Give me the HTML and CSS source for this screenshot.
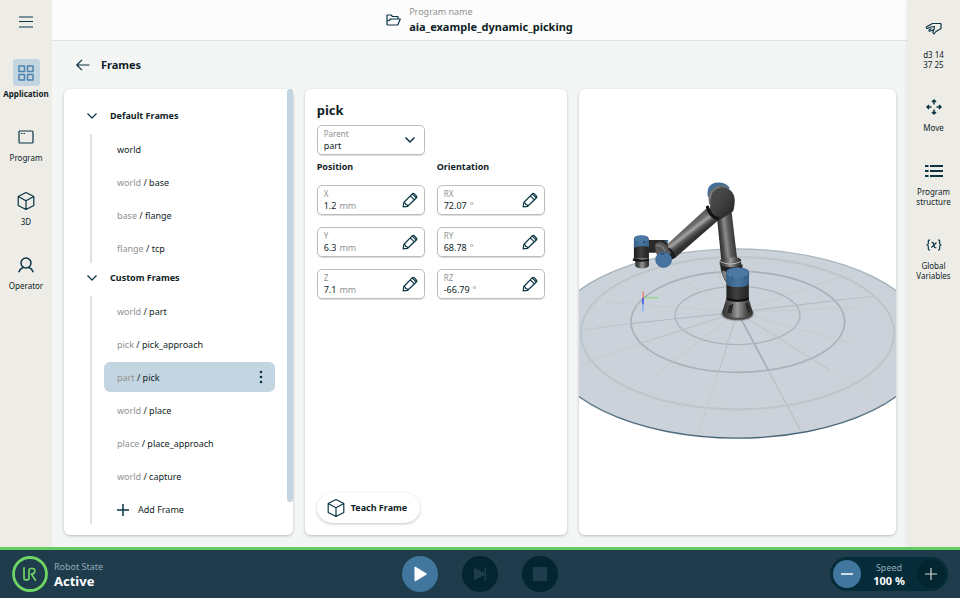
FILE: index.html
```html
<!DOCTYPE html>
<html lang="en">
<head>
<meta charset="utf-8">
<meta name="viewport" content="width=device-width, initial-scale=1">
<title>Frames</title>
<link rel="stylesheet" href="styles.css">
</head>
<body>
<svg class="defs" aria-hidden="true">
  <symbol id="chevron" viewBox="0 0 12 12"><path d="M1.500 3.500 6 8l4.500-4.500"/></symbol>
  <symbol id="cube" viewBox="0 0 18 20"><path d="M9 1.500 16.800 5.500v9L9 18.500 1.200 14.500v-9zM1.200 5.500 9 9.800l7.800-4.300M9 9.800v8.700"/></symbol>
  <symbol id="pencil" viewBox="0 0 16 16"><path d="M1.200 14.800 1.800 10.500 10.200 1.900q1.100-1 2.200 0l1.900 1.900q1 1.100 0 2.200L5.700 14.300zM8.300 3.900l4 4M10.200 1.900l4.100 4.100M1.800 10.500q1.700 0 1.900 1.900 1.900.1 2 1.900"/></symbol>
</svg>

<div class="workspace">
  <nav class="rail rail-left" aria-label="Main">
    <button class="menu" aria-label="Menu"><svg width="14" height="12" viewBox="0 0 14 12"><path d="M0 1h14M0 11h14" stroke="#78909a" stroke-width="2"/><path d="M0 5.500h14" stroke="#0b3544"/></svg></button>
    <a class="rail-item active" href="#application"><span class="rail-icon"><svg class="icon" width="16" height="16" viewBox="0 0 16 16"><path d="M1 1h5.500v5.500H1zM9.500 1H15v5.500H9.500zM1 9.500h5.500V15H1zM9.500 9.500H15V15H9.500z"/></svg></span><span>Application</span></a>
    <a class="rail-item" href="#program"><span class="rail-icon"><svg class="icon" width="16" height="14" viewBox="0 0 16 14"><rect x="1" y="1" width="14" height="12" rx="1"/><path d="M3 3.500h1.500M5.500 3.500H7"/></svg></span><span>Program</span></a>
    <a class="rail-item" href="#view"><span class="rail-icon"><svg class="icon" width="18" height="20"><use href="#cube"/></svg></span><span>3D</span></a>
    <a class="rail-item" href="#operator"><span class="rail-icon"><svg class="icon thick" width="16" height="16" viewBox="0 0 16 16"><circle cx="8" cy="6" r="5"/><path d="M.8 15.300Q2 11.200 5.600 10.400M15.200 15.300Q14 11.200 10.400 10.400"/></svg></span><span>Operator</span></a>
  </nav>

  <div class="center">
    <header class="program-bar">
      <svg class="icon" width="15" height="12" viewBox="0 0 15 12"><path d="M1 11V1h4l1.500 1.500H12V5M1 11h10.800L14.300 5H4.500L3.200 6.500 1 7"/></svg>
      <div class="stack"><span class="muted">Program name</span><strong>aia_example_dynamic_picking</strong></div>
    </header>

    <main>
      <div class="page-title">
        <button aria-label="Back"><svg class="icon" width="14" height="12" viewBox="0 0 14 12"><path d="M13.500 6H1M6 .8.8 6 6 11.200"/></svg></button>
        <h1>Frames</h1>
      </div>
      <div class="panels">
        <section class="panel tree" aria-label="Frame list">
          <button class="group"><svg class="icon" width="12" height="12"><use href="#chevron"/></svg>Default Frames</button>
          <ul>
            <li><button class="frame">world</button></li>
            <li><button class="frame"><i>world</i> / base</button></li>
            <li><button class="frame"><i>base</i> / flange</button></li>
            <li><button class="frame"><i>flange</i> / tcp</button></li>
          </ul>
          <button class="group"><svg class="icon" width="12" height="12"><use href="#chevron"/></svg>Custom Frames</button>
          <ul>
            <li><button class="frame"><i>world</i> / part</button></li>
            <li><button class="frame"><i>pick</i> / pick_approach</button></li>
            <li class="selected"><button class="frame"><i>part</i> / pick</button><button class="more" aria-label="More"><svg width="4" height="14" viewBox="0 0 4 14" fill="#0b3544"><circle cx="2" cy="2" r="1.300"/><circle cx="2" cy="7" r="1.300"/><circle cx="2" cy="12" r="1.300"/></svg></button></li>
            <li><button class="frame"><i>world</i> / place</button></li>
            <li><button class="frame"><i>place</i> / place_approach</button></li>
            <li><button class="frame"><i>world</i> / capture</button></li>
            <li><button class="frame add"><svg class="icon thick" width="12" height="12" viewBox="0 0 12 12"><path d="M6 0v12M0 6h12"/></svg>Add Frame</button></li>
          </ul>
          <span class="scroll-thumb"></span>
        </section>

        <section class="panel detail" aria-label="Frame details">
          <h2>pick</h2>
          <div class="fields">
            <div class="field parent">
              <label for="parent">Parent</label>
              <select id="parent"><option>part</option><option>world</option></select>
              <svg class="icon thick" width="12" height="12"><use href="#chevron"/></svg>
            </div>
          </div>
          <div class="fields">
            <h3>Position</h3><h3>Orientation</h3>
            <div class="field"><label for="x">X</label><div class="value"><input id="x" value="1.2"><span>mm</span></div><button aria-label="Edit X"><svg class="icon" width="16" height="16"><use href="#pencil"/></svg></button></div>
            <div class="field"><label for="rx">RX</label><div class="value"><input id="rx" value="72.07"><span>°</span></div><button aria-label="Edit RX"><svg class="icon" width="16" height="16"><use href="#pencil"/></svg></button></div>
            <div class="field"><label for="y">Y</label><div class="value"><input id="y" value="6.3"><span>mm</span></div><button aria-label="Edit Y"><svg class="icon" width="16" height="16"><use href="#pencil"/></svg></button></div>
            <div class="field"><label for="ry">RY</label><div class="value"><input id="ry" value="68.78"><span>°</span></div><button aria-label="Edit RY"><svg class="icon" width="16" height="16"><use href="#pencil"/></svg></button></div>
            <div class="field"><label for="z">Z</label><div class="value"><input id="z" value="7.1"><span>mm</span></div><button aria-label="Edit Z"><svg class="icon" width="16" height="16"><use href="#pencil"/></svg></button></div>
            <div class="field"><label for="rz">RZ</label><div class="value"><input id="rz" value="-66.79"><span>°</span></div><button aria-label="Edit RZ"><svg class="icon" width="16" height="16"><use href="#pencil"/></svg></button></div>
          </div>
          <button class="teach"><svg class="icon" width="18" height="20"><use href="#cube"/></svg>Teach Frame</button>
        </section>

        <section class="panel scene" aria-label="3D view">
          <svg viewBox="0 0 951 1335" preserveAspectRatio="xMidYMid slice" role="img" aria-label="Robot arm on round floor grid">
            <defs>
              <linearGradient id="upright" gradientUnits="userSpaceOnUse" x1="430" y1="232" x2="482" y2="226"><stop offset="0" stop-color="#282828"/><stop offset=".2" stop-color="#4a4a4a"/><stop offset=".42" stop-color="#8c8c8c"/><stop offset=".62" stop-color="#5c5c5c"/><stop offset="1" stop-color="#2d2d2d"/></linearGradient>
              <linearGradient id="forearm" gradientUnits="userSpaceOnUse" x1="326" y1="194" x2="356" y2="233"><stop offset="0" stop-color="#555"/><stop offset=".35" stop-color="#6c6c6c"/><stop offset=".55" stop-color="#a4a4a4"/><stop offset=".75" stop-color="#5a5a5a"/><stop offset="1" stop-color="#303030"/></linearGradient>
              <linearGradient id="steel"><stop offset="0" stop-color="#333"/><stop offset=".25" stop-color="#505050"/><stop offset=".5" stop-color="#999"/><stop offset=".75" stop-color="#555"/><stop offset="1" stop-color="#292929"/></linearGradient>
              <linearGradient id="dark"><stop offset="0" stop-color="#1d1d1d"/><stop offset=".45" stop-color="#404040"/><stop offset="1" stop-color="#222"/></linearGradient>
              <linearGradient id="elbow" x1="0" y1="0" x2="1" y2="1"><stop offset="0" stop-color="#505050"/><stop offset=".45" stop-color="#424242"/><stop offset="1" stop-color="#202020"/></linearGradient>
              <linearGradient id="blue"><stop offset="0" stop-color="#375f86"/><stop offset=".5" stop-color="#4875a0"/><stop offset="1" stop-color="#375f86"/></linearGradient>
              <linearGradient id="rim" x1="0" y1="0" x2="0" y2="1"><stop offset="0" stop-color="#aebbc1"/><stop offset=".6" stop-color="#8296a2"/><stop offset="1" stop-color="#486577"/></linearGradient>
              <radialGradient id="shadow"><stop offset=".6" stop-color="#333" stop-opacity=".8"/><stop offset="1" stop-color="#555" stop-opacity="0"/></radialGradient>
            </defs>
            <g transform="translate(-11 213)">
              <ellipse cx="487" cy="549" rx="573" ry="283" fill="#cbd2d9" stroke="url(#rim)" stroke-width="4"/>
              <g fill="none">
                <ellipse cx="487" cy="518" rx="469" ry="228" stroke="#bdc6cc" stroke-width="6"/>
                <ellipse cx="488" cy="484" rx="320" ry="151" stroke="#a5b3b9" stroke-width="5"/>
                <ellipse cx="487" cy="465" rx="187" ry="87" stroke="#a8b5bb" stroke-width="4"/>
              </g>
              <g stroke="#afbbc1" stroke-width="3" fill="none">
                <path d="M487 455 580 630" stroke="#a1afb6" stroke-width="5"/>
                <path d="M580 630 675 808" stroke="#b9c3c9" stroke-width="4"/>
                <path d="M487 455 430 636" stroke="#b5bfc6"/>
                <path d="M430 636 372 810M487 455 245 640" stroke="#c3cbd1"/>
                <path d="M487 455 168 489M487 455 808 417"/>
                <path d="M168 489 25 508M808 417 895 407M487 455 190 550M487 455 765 630" stroke="#bac4ca"/>
                <path d="M190 550 20 612M765 630 880 700M487 455 850 555M487 455 860 440M487 455 800 347M487 455 95 425M487 455 250 318M487 455 405 296M487 455 540 296" stroke="#c2cbd1" stroke-width="2"/>
              </g>
              <ellipse cx="487" cy="460" rx="54" ry="24" fill="url(#shadow)"/>
              <path d="M441 455 453 416q34 12 68 0l12 39q-1 22-46 22t-46-22z" fill="url(#steel)"/>
              <path d="M462 435 475 430 469 459 457 456zM510 430 518 427 526 451 520 458z" fill="#272727"/>
              <path d="M441 455q7 17 46 17t46-17v7q-6 16-46 16t-46-16z" fill="#4c4c4c"/>
              <path d="M435 312h67v70l-45-12q-19-24-22-58z" fill="#222"/>
              <path d="M441 330q17 0 20 20v19q-20-17-20-39z" fill="#808080"/>
              <path d="M454 360h67v55q-2 9-34 9t-33-9z" fill="url(#dark)"/>
              <path d="M454 411q33 13 67 0v6q-33 14-67 0z" fill="#0c0c0c"/>
              <path d="M453 336q0-15 34-15t35 15l-1 34q-5 10-34 10t-33-10z" fill="url(#blue)"/>
              <ellipse cx="487" cy="338" rx="33" ry="16" fill="#4b78a3"/>
              <path d="M472 347v10M508 347l5 8" stroke="#294a66" stroke-width="2"/>
              <path d="M425 165 468 143 487 304H439z" fill="url(#upright)"/>
              <path d="M434 302q8-14 30-9 27-7 34 5v17q-32 12-64-2z" fill="url(#steel)"/>
              <path d="M434 303q31 16 64 0" fill="none" stroke="#b9b9b9" stroke-width="3"/>
              <path d="M398 108q-6-39 32-41 22 0 34 16l-50 37z" fill="#426f99"/>
              <path d="M402 132q-8-40 17-52 28-13 43 7l-30 52z" fill="#6c6c6c"/>
              <path d="M407 116q0-30 31-35 38 2 41 38-1 24-5 34l-39 25-31-27z" fill="url(#elbow)"/>
              <path d="M406 114q1-27 30-34" fill="none" stroke="#a4a4a4" stroke-width="2" stroke-dasharray="6 2"/>
              <path d="M397 142 431 178 302 291q-13-2-27-26-3-8 5-16z" fill="url(#forearm)"/>
              <path d="M392 139 400 135q9 29 34 37l-4 9q-32-8-38-42z" fill="#151515"/>
              <path d="M274 259q20 3 28 32l-13 7q-22-9-23-26z" fill="#1c1c1c"/>
              <path d="M221 239h57v38h-57z" fill="#292929"/>
              <path d="M241 251q15-14 31 3l17 25-35 16q-15-14-13-44z" fill="#5a5a5a"/>
              <path d="M244 255q18-1 26 17" stroke="#888" stroke-width="3" fill="none"/>
              <path d="M268 240h13l-5 9z" fill="#426f99"/>
              <path d="M177 252h45v43h-45z" fill="url(#dark)"/>
              <path d="M181 297h41v19q-5 8-21 8t-20-8z" fill="url(#steel)"/>
              <path d="M174 294h10q20 6 38 0v6q-22 7-48 1z" fill="#151515"/>
              <path d="M177 237q0-12 22-12t23 12v24q-23-9-45 2z" fill="url(#blue)"/>
              <ellipse cx="199" cy="236" rx="20" ry="10" fill="#4b78a3"/>
              <ellipse cx="266" cy="298" rx="24" ry="23" fill="#4673a0" stroke="#3d688e" stroke-width="2"/>
              <path d="M258 281l10-1M207 241v7" stroke="#203747" stroke-width="3"/>
              <path d="M206 412h44" stroke="#83dc6a" stroke-width="3"/>
              <path d="M205 393v21" stroke="#eb8064" stroke-width="4"/>
              <path d="M204 412v20" stroke="#4c55de" stroke-width="5"/>
              <path d="M204 432v21" stroke="#78aaf0" stroke-width="4"/>
            </g>
          </svg>
        </section>
      </div>
    </main>
  </div>

  <aside class="rail rail-right" aria-label="Tools">
    <a class="rail-item checksum" href="#safety"><span class="rail-icon"><svg class="icon" width="17" height="13" viewBox="0 0 17 13"><path d="M16 1.500v5L11 9.500 9 12 7.800 10.500l1.200-3L5.500 9Q3.500 9.500 4 8l2.500-1.500M16 1.500H7.500L2 4.500Q.5 6 2.500 6.500L5.500 5l4-.5-.5 3"/></svg></span><span>d3 14<br>37 25</span></a>
    <a class="rail-item" href="#move"><span class="rail-icon"><svg class="icon thick" width="16" height="16" viewBox="0 0 16 16"><path d="M8 1.500V5.500M8 10.500v4M1.500 8h4M10.500 8h4M6 3l2-2 2 2M6 13l2 2 2-2M3 6 1 8l2 2M13 6l2 2-2 2"/></svg></span><span>Move</span></a>
    <a class="rail-item" href="#structure"><span class="rail-icon"><svg class="icon bars" width="18" height="12" viewBox="0 0 18 12"><path d="M0 1h3.500M5 1h13M0 6h3.500M5 6h13M0 11h3.500M5 11h13"/></svg></span><span>Program<br>structure</span></a>
    <a class="rail-item" href="#variables"><span class="rail-icon"><svg class="icon" width="16" height="12" viewBox="0 0 16 12"><path d="M4 .8Q2.300.8 2.300 2.300V4.500Q2.300 6 .8 6q1.500 0 1.500 1.500v2.200Q2.300 11.200 4 11.200M12 .8q1.700 0 1.700 1.500V4.500Q13.700 6 15.200 6q-1.500 0-1.500 1.500v2.200q0 1.500-1.700 1.500M5.500 3.500q1.500-.5 2 1l1 3.500q.5 1.200 1.800.5M10.500 3.500 5.300 8.700"/></svg></span><span>Global<br>Variables</span></a>
  </aside>
</div>

<footer>
  <div class="state">
    <svg width="36" height="36" viewBox="0 0 36 36" fill="none" stroke="#6fd564"><circle cx="18" cy="18" r="16.500" stroke-width="2.800"/><path d="M12 11.200V22q0 1.800 1.800 1.800h1.400q1.800 0 1.800-1.800V14.500q0-2 2-2h1.500q2.300 0 2.300 2v.8q0 2-2.300 2.500l-1 .4 4.300 6.500" stroke-width="1.700"/></svg>
    <div class="stack"><span>Robot State</span><strong>Active</strong></div>
  </div>
  <div class="transport">
    <button class="play" aria-label="Play"><svg width="14" height="16" viewBox="0 0 14 16" fill="#fff"><path d="M2.500.800 13.200 7.200q1 .8 0 1.600L2.500 15.200Q1.500 15.500 1.500 14.500V1.500Q1.500.500 2.500.800z"/></svg></button>
    <button disabled aria-label="Step"><svg width="14" height="14" viewBox="0 0 14 14" fill="#1e3c4c"><path d="M1 .5 11.500 6V.500H13v13h-1.500V8L1 13.500z"/></svg></button>
    <button disabled aria-label="Stop"><svg width="14" height="14" viewBox="0 0 14 14"><rect width="14" height="14" rx="1" fill="#1e3c4c"/></svg></button>
  </div>
  <div class="speed">
    <button class="minus" aria-label="Slower"><svg width="12" height="12" viewBox="0 0 12 12"><path d="M0 6h12" stroke="#fff" stroke-width="1.500"/></svg></button>
    <div class="stack"><span>Speed</span><strong>100 %</strong></div>
    <button aria-label="Faster"><svg width="12" height="12" viewBox="0 0 12 12"><path d="M0 6h12M6 0v12" stroke="#d8d7d1" stroke-width="1.200"/></svg></button>
  </div>
</footer>
</body>
</html>
```
FILE: styles.css
```css
* { box-sizing: border-box; margin: 0; padding: 0; }

body {
  display: flex;
  flex-direction: column;
  min-height: 100vh;
  background: #f4f6f6;
  color: #101e26;
  font: 9px/12px "Noto Sans", sans-serif;
}

button, input, select { border: 0; background: none; color: inherit; font: inherit; }
button { display: flex; align-items: center; justify-content: center; cursor: pointer; }
a { color: inherit; text-decoration: none; }
ul { list-style: none; }
svg { display: block; flex: none; }

.defs { display: none; }
.icon { fill: none; stroke: #0b3544; stroke-width: 1.2; stroke-linejoin: round; }
.thick { stroke-width: 1.5; }
.bars { stroke-width: 2; }
.stack { display: flex; flex-direction: column; }

.workspace { flex: 1; display: flex; }
.center { flex: 1; display: flex; flex-direction: column; min-width: 0; }

/* Side rails */
.rail { display: flex; flex-direction: column; background: #edece7; }
.rail-left { width: 52px; }
.rail-right { width: 53px; padding-top: 15px; box-shadow: -1px 0 3px #0000000f; }
.menu { height: 43px; margin-bottom: 16px; }
.rail-item {
  display: flex;
  flex-direction: column;
  align-items: center;
  gap: 3px;
  padding-bottom: 24px;
  font-size: 8px;
  line-height: 10px;
  text-align: center;
}
.checksum { gap: 8px; padding-bottom: 23px; }
.rail-icon { display: grid; place-items: center; width: 27px; height: 27px; border-radius: 3px; }
.active { font-weight: 700; }
.active .rail-icon { background: #c3d5e1; }
.active .icon { stroke: #4d83ad; stroke-width: 1.5; }

/* Header */
.program-bar {
  display: flex;
  align-items: center;
  justify-content: center;
  gap: 8px;
  height: 41px;
  border-bottom: 1px solid #e2e4e4;
  background: #fcfcfc;
}
.program-bar .stack { line-height: 14px; }
.program-bar strong { font-size: 11px; line-height: 16px; font-weight: 700; }
.muted { color: #929292; }

main { flex: 1; display: flex; flex-direction: column; padding: 0 11px 12px 12px; }
.page-title { display: flex; align-items: center; gap: 11px; height: 48px; padding-left: 12px; }
h1 { font-size: 11px; font-weight: 700; }

.panels { flex: 1; display: grid; grid-template-columns: 229fr 263fr 317fr; gap: 12px; }
.panel { position: relative; border-radius: 6px; background: #fff; box-shadow: 0 1px 3px #0000003d; }

/* Frame tree */
.tree { padding: 12px 18px 11px 22px; }
.group { gap: 12px; height: 30px; font-weight: 700; }
.tree ul { display: grid; gap: 3px; margin: 3px 0 0 4px; padding-left: 12px; border-left: 2px solid #e0e0e0; }
.tree li { display: flex; border-radius: 6px; }
.selected { background: #c3d5e1; }
.frame { flex: 1; justify-content: flex-start; height: 30px; padding: 1px 0 0 13px; white-space: pre; }
.frame i { color: #929292; font-style: normal; }
.add { gap: 9px; }
.more { width: 28px; }
.scroll-thumb { position: absolute; top: 0; right: 0; width: 6px; height: 92.5%; border-radius: 3px; background: #c3d5e1; }

/* Frame details */
.detail { display: flex; flex-direction: column; padding: 12px; }
h2 { margin-bottom: 6px; font-size: 13px; line-height: 18px; font-weight: 700; }
h3 { font-size: 9px; line-height: 12px; font-weight: 700; }
.fields { display: grid; grid-template-columns: repeat(2, 108px); gap: 12px; }
.fields + .fields { margin-top: 6px; }
.field {
  position: relative;
  display: flex;
  flex-direction: column;
  height: 30px;
  padding: 2px 6px;
  border: 1px solid #bdbdbd;
  border-radius: 5px;
  box-shadow: 0 1px 1px #00000026;
}
.field label { color: #929292; font-size: 8px; }
.value { display: flex; gap: 3px; }
.value input { field-sizing: content; outline: 0; }
.value span { color: #929292; }
.field button, .parent svg { position: absolute; top: 6px; right: 6px; }
.parent svg { top: 8px; right: 8px; pointer-events: none; }
.parent select { appearance: none; }
.teach {
  align-self: flex-start;
  gap: 6px;
  height: 30px;
  margin-top: auto;
  padding: 0 13px 0 10px;
  border-radius: 15px;
  background: #fff;
  box-shadow: 0 1px 3px #0000003d;
  font-weight: 700;
}

/* 3D view */
.scene { overflow: hidden; }
.scene svg { position: absolute; width: 100%; height: 100%; }

/* Status bar */
footer {
  display: grid;
  grid-template-columns: 1fr auto 1fr;
  align-items: center;
  height: 52px;
  padding: 0 12px 2px;
  border-top: 3px solid #63cb61;
  background: #1e3c4c;
  color: #fff;
}
footer .stack { line-height: 14px; }
footer .stack span { color: #93abb9; }
footer strong { font-size: 13px; font-weight: 700; }
.state { display: flex; align-items: center; gap: 6px; }
.transport { display: flex; gap: 24px; }
.transport button { width: 36px; height: 36px; border-radius: 50%; background: #02252f; }
.transport .play { background: #41779e; }
.speed {
  display: flex;
  align-items: center;
  justify-content: space-between;
  justify-self: end;
  width: 118px;
  height: 34px;
  padding: 0 3px;
  border-radius: 17px;
  background: #052c38;
}
.speed .stack { align-items: center; line-height: 13px; }
.speed strong { font-size: 11px; }
.speed button { width: 28px; height: 28px; border-radius: 50%; background: #02252f; }
.speed .minus { background: #41779e; }
```
